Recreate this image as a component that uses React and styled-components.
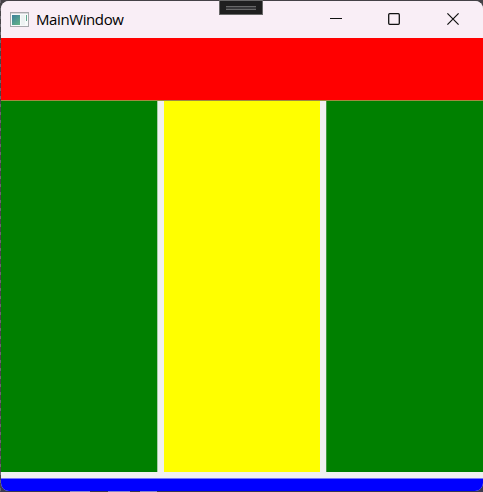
import React from "react";
import styled, { createGlobalStyle } from "styled-components";

const GlobalStyle = createGlobalStyle`
  * { box-sizing: border-box; }
  body { margin: 0; overflow: hidden; background: #3f3f41; }
`;

const Desktop = styled.div`
  position: relative;
  width: 483px;
  height: 492px;
  padding: 1px 0 1px 1px;
  background:
    linear-gradient(90deg, transparent 70px, #8585c8 70px 90px, transparent 90px 108px, #8585c8 108px 130px, transparent 130px 140px, #8585c8 140px 157px, transparent 157px) 0 100% / 100% 1px no-repeat,
    repeating-linear-gradient(#6c6870 0 3px, #484548 3px 8px) 0 0 / 1px 100% no-repeat,
    linear-gradient(#454247, #3c3a50);
`;

const Window = styled.main`
  display: grid;
  grid-template-rows: 37px 62px 1fr 13px;
  width: 482px;
  height: 490px;
  border-radius: 8px;
  overflow: hidden;
  background: #f0f0f0;
`;

const TitleBar = styled.header`
  display: flex;
  align-items: center;
  padding-left: 9px;
  background: #f9eef6;
`;

const Title = styled.h1`
  flex: 1;
  margin: 0 0 2px 6px;
  font: 400 15px/20px "Open Sans", "Noto Sans", sans-serif;
  letter-spacing: -0.4px;
  color: #000;
`;

const Controls = styled.div`
  display: flex;
  height: 100%;
`;

const ControlButton = styled.button`
  display: grid;
  place-items: center;
  width: ${({ $width }) => $width}px;
  height: 36px;
  padding: 0;
  border: 0;
  background: transparent;
`;

const Header = styled.section`
  background: #ff0000;
`;

const Columns = styled.section`
  display: grid;
  grid-template-columns: 157px 156px 157px;
  column-gap: 6px;
  padding-bottom: 6px;
  border-top: 1px solid #a28a40;
`;

const Column = styled.div`
  background: ${({ $color }) => $color};
  border-left: ${({ $left }) => ($left ? `1px solid ${$left}` : "0")};
  border-right: ${({ $right }) => ($right ? `1px solid ${$right}` : "0")};
`;

const Footer = styled.footer`
  background: #0000ff;
  border-top: 1px solid #7878f8;
`;

const DebugHandle = styled.div`
  position: absolute;
  top: 0;
  left: 219px;
  width: 44px;
  height: 15px;
  border: 1px solid #686868;
  background: #1f1f1f;
  display: grid;
  place-items: center;
`;

const Grip = styled.span`
  width: 30px;
  height: 4px;
  border: solid #686868;
  border-width: 1px 0;
  background: #38383a;
`;

function AppIcon() {
  return (
    <svg width="20" height="16" viewBox="0 0 20 16" shapeRendering="crispEdges">
      <defs>
        <linearGradient id="screen" gradientUnits="userSpaceOnUse" x1="2" y1="2" x2="11" y2="13">
          <stop offset="0" stopColor="#397b9d" />
          <stop offset="1" stopColor="#65b985" />
        </linearGradient>
      </defs>
      <rect x=".5" y=".5" width="18" height="14" fill="#f8fafa" stroke="#a8a8ac" />
      <path d="M1 1h17v1H1z" fill="#d8d8dc" />
      <rect x="2" y="3" width="8" height="10" fill="url(#screen)" />
      <rect x="11" y="3" width="4" height="10" fill="#edf2f2" />
      <rect x="16" y="3" width="1" height="6" fill="#62a88e" />
    </svg>
  );
}

export default function App() {
  return (
    <>
      <GlobalStyle />
      <Desktop>
        <Window>
          <TitleBar>
            <AppIcon />
            <Title>MainWindow</Title>
            <Controls>
              <ControlButton $width={58} aria-label="Minimize">
                <svg width="12" height="12"><path d="M0 5.5h12" stroke="#111" /></svg>
              </ControlButton>
              <ControlButton $width={58} aria-label="Maximize">
                <svg width="12" height="12">
                  <rect x=".7" y=".7" width="10.6" height="10.6" rx="1" fill="none" stroke="#111" strokeWidth="1.3" />
                </svg>
              </ControlButton>
              <ControlButton $width={60} aria-label="Close">
                <svg width="12" height="12"><path d="M.4.4l11.2 11.2M11.6.4L.4 11.6" stroke="#111" strokeWidth="1.2" /></svg>
              </ControlButton>
            </Controls>
          </TitleBar>
          <Header />
          <Columns>
            <Column $color="#008000" $right="#a8cca8" />
            <Column $color="#ffff00" />
            <Column $color="#008000" $left="#409c40" />
          </Columns>
          <Footer />
        </Window>
        <DebugHandle><Grip /></DebugHandle>
      </Desktop>
    </>
  );
}
